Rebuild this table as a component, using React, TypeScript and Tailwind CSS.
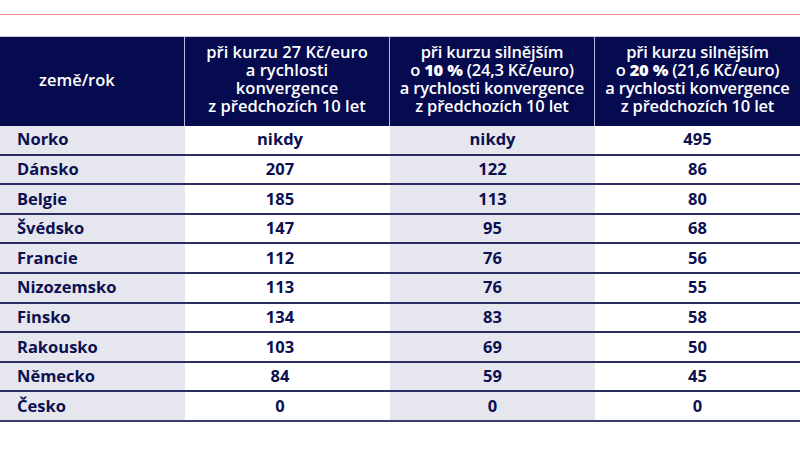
const rows: [string, string, string, string][] = [
  ['Norko', 'nikdy', 'nikdy', '495'],
  ['Dánsko', '207', '122', '86'],
  ['Belgie', '185', '113', '80'],
  ['Švédsko', '147', '95', '68'],
  ['Francie', '112', '76', '56'],
  ['Nizozemsko', '113', '76', '55'],
  ['Finsko', '134', '83', '58'],
  ['Rakousko', '103', '69', '50'],
  ['Německo', '84', '59', '45'],
  ['Česko', '0', '0', '0'],
];

export default function App() {
  return (
    <div
      className="w-[800px] h-[449px] bg-white overflow-hidden text-[#0c1050]"
      style={{ fontFamily: '"Open Sans", "Liberation Sans", sans-serif' }}
    >
      <div className="h-[14px]" />
      <div className="h-px bg-[#ef8c8c]" />
      <div className="h-[21px]" />
      <div className="flex h-[90px] bg-[#060a4e] text-white text-[16.5px] leading-[18px] font-semibold border-t border-[#c9cbe0]">
        <div className="w-[185px] flex items-center pl-[39px] pb-[3px] border-r border-[#b9bcd8]">země/rok</div>
        <div className="w-[205px] flex items-center justify-center text-center pb-[5px] border-r border-[#b9bcd8]">
          <div>
            při kurzu 27 Kč/euro
            <br />a rychlosti
            <br />konvergence
            <br />z předchozích 10 let
          </div>
        </div>
        <div className="w-[205px] flex items-center justify-center text-center pb-[5px] border-r border-[#b9bcd8]">
          <div className="whitespace-nowrap tracking-[-0.2px]">
            při kurzu silnějším
            <br />o <b className="font-extrabold">10 %</b> (24,3 Kč/euro)
            <br />a rychlosti konvergence
            <br />z předchozích 10 let
          </div>
        </div>
        <div className="flex-1 flex items-center justify-center text-center pb-[5px]">
          <div className="whitespace-nowrap tracking-[-0.2px]">
            při kurzu silnějším
            <br />o <b className="font-extrabold">20 %</b> (21,6 Kč/euro)
            <br />a rychlosti konvergence
            <br />z předchozích 10 let
          </div>
        </div>
      </div>
      {rows.map((r, i) => (
        <div key={r[0]} className={`flex h-[29.6px] text-[16.5px] font-bold border-b-2 ${i === rows.length - 1 ? 'border-[#3a3c6c]' : 'border-[#2a2c62]'}`}>
          <div className="w-[185px] bg-[#e6e6ee] flex items-center pl-[17px]">{r[0]}</div>
          <div className="w-[205px] bg-white flex items-center justify-center pr-[15px]">{r[1]}</div>
          <div className="w-[205px] bg-[#e6e6ee] flex items-center justify-center">{r[2]}</div>
          <div className="flex-1 bg-white flex items-center justify-center">{r[3]}</div>
        </div>
      ))}
    </div>
  );
}
